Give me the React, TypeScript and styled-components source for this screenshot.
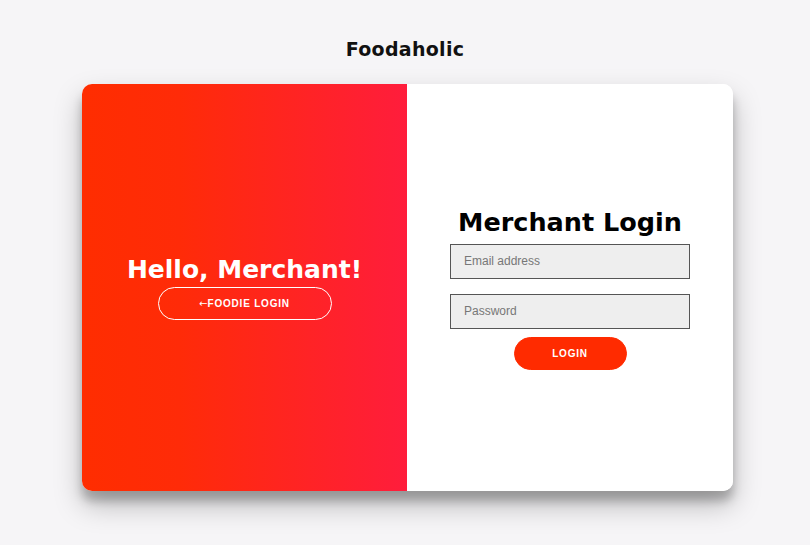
import styled, { createGlobalStyle } from "styled-components";

const Global = createGlobalStyle`
    * {
        box-sizing: border-box;
    }
    body {
        margin: 0;
        background: #f6f5f7;
        font-family: "DejaVu Sans", "Liberation Sans", sans-serif;
    }
`;

const Page = styled.div`
    display: flex;
    flex-direction: column;
    align-items: center;
    min-height: 100vh;
    padding-top: 37px;
`;

const Brand = styled.h2`
    margin: 0 0 23px;
    font-size: 19px;
    font-weight: 700;
    letter-spacing: 0.3px;
    color: #111;
    line-height: 24px;
`;

const Card = styled.div`
    display: flex;
    width: 651px;
    height: 407px;
    margin-left: 5px;
    border-radius: 10px;
    overflow: hidden;
    background: #fff;
    box-shadow: 0 14px 28px rgba(0, 0, 0, 0.25), 0 10px 10px rgba(0, 0, 0, 0.22);
`;

const Panel = styled.div<{ $accent?: boolean }>`
    flex: 0 0 ${p => (p.$accent ? "325px" : "326px")};
    display: flex;
    flex-direction: column;
    align-items: center;
    justify-content: center;
    color: ${p => (p.$accent ? "#fff" : "#000")};
    background: ${p =>
        p.$accent ? "linear-gradient(to right, #ff2d00, #ff2b08 30%, #ff1d3c)" : "#fff"};
`;

const Heading = styled.h1`
    margin: 0 0 3px;
    font-size: 25px;
    font-weight: 700;
    line-height: 28px;
`;

const BigHeading = styled(Heading)`
    font-size: 25.5px;
    line-height: 32px;
    margin-bottom: 6px;
`;

const Field = styled.input`
    width: 240px;
    height: 35px;
    margin-bottom: 15px;
    padding: 0 13px;
    background: #eee;
    border: 1px solid #555;
    font-family: "Liberation Sans", Arial, sans-serif;
    font-size: 12px;
    color: #333;
    outline: none;
    &::placeholder {
        color: #777;
    }
    &:last-of-type {
        margin-bottom: 8px;
    }
`;

const Button = styled.button<{ $ghost?: boolean }>`
    height: 33px;
    width: ${p => (p.$ghost ? "174px" : "113px")};
    border-radius: 20px;
    border: 1px solid ${p => (p.$ghost ? "#fff" : "#ff2b00")};
    background: ${p => (p.$ghost ? "transparent" : "#ff2b00")};
    color: #fff;
    font-family: "Liberation Sans", Arial, sans-serif;
    font-size: 10px;
    font-weight: 700;
    letter-spacing: 0.8px;
    text-transform: uppercase;
    cursor: pointer;
`;

const Arrow = styled.span`
    font-family: "DejaVu Sans", sans-serif;
    font-weight: 400;
    letter-spacing: 0;
`;

const Form = styled.form`
    display: flex;
    flex-direction: column;
    align-items: center;
`;

export default function App() {
    return (
        <Page>
            <Global />
            <Brand>Foodaholic</Brand>
            <Card>
                <Panel $accent>
                    <Heading>Hello, Merchant!</Heading>
                    <Button $ghost type="button"><Arrow>&larr;</Arrow>Foodie Login</Button>
                </Panel>
                <Panel>
                    <Form onSubmit={e => e.preventDefault()}>
                        <BigHeading>Merchant Login</BigHeading>
                        <Field type="email" placeholder="Email address" />
                        <Field type="password" placeholder="Password" />
                        <Button type="submit">Login</Button>
                    </Form>
                </Panel>
            </Card>
        </Page>
    );
}
